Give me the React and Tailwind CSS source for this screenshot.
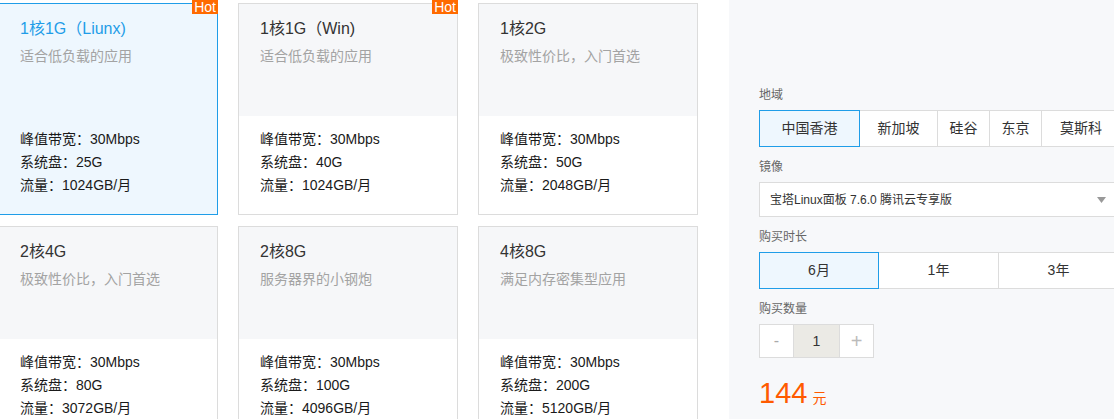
// Cloud server purchase page — plan cards on the left, order options on the right
import React from 'react';

const plans = [
  { name: '1核1G（Liunx)', desc: '适合低负载的应用', disk: '25G', flow: '1024GB/月', hot: true },
  { name: '1核1G（Win)', desc: '适合低负载的应用', disk: '40G', flow: '1024GB/月', hot: true },
  { name: '1核2G', desc: '极致性价比，入门首选', disk: '50G', flow: '2048GB/月' },
  { name: '2核4G', desc: '极致性价比，入门首选', disk: '80G', flow: '3072GB/月' },
  { name: '2核8G', desc: '服务器界的小钢炮', disk: '100G', flow: '4096GB/月' },
  { name: '4核8G', desc: '满足内存密集型应用', disk: '200G', flow: '5120GB/月' },
];

const regions = [
  { label: '中国香港', w: 'w-[101px]' },
  { label: '新加坡', w: 'w-[78px]' },
  { label: '硅谷', w: 'w-[53px]' },
  { label: '东京', w: 'w-[53px]' },
  { label: '莫斯科', w: 'w-[80px]' },
];

const durations = ['6月', '1年', '3年'];

const PlanCard = ({ plan, active }) => (
  <div
    className={`relative w-[220px] h-[212px] border ${
      active ? 'border-[#1f9de8] bg-[#eef7fe]' : 'border-[#dcdcdc] bg-white'
    }`}
  >
    {plan.hot && (
      <span className="absolute top-[-4px] right-[-1px] h-[14px] px-[2px] bg-[#ff6a00] text-white text-[14px] leading-[15px]">
        Hot
      </span>
    )}
    <div className={`h-[112px] px-[21px] pt-[14px] ${active ? '' : 'bg-[#f6f7f9]'}`}>
      <div className={`text-[16px] leading-[22px] ${active ? 'text-[#1f9de8]' : 'text-[#333]'}`}>{plan.name}</div>
      <div className="mt-[6px] text-[14px] leading-[20px] text-[#a3a3a3]">{plan.desc}</div>
    </div>
    <div className="px-[21px] pt-[12px] text-[14px] leading-[23px] text-[#1a1a1a]">
      <div>峰值带宽：30Mbps</div>
      <div>系统盘：{plan.disk}</div>
      <div>流量：{plan.flow}</div>
    </div>
  </div>
);

const Label = ({ children, first }) => (
  <div className={`${first ? '' : 'mt-[10px]'} mb-[5px] text-[12px] leading-[20px] text-[#666]`}>{children}</div>
);

export default function App() {
  return (
    <div
      className="w-[1114px] h-[419px] overflow-hidden bg-white flex"
      style={{ fontFamily: '"Liberation Sans", "Noto Sans CJK SC", sans-serif' }}
    >
      <div className="ml-[-2px] pt-[3px] shrink-0">
        <div className="grid grid-cols-[220px_220px_220px] gap-x-[20px] gap-y-[11px]">
          {plans.map((p, i) => (
            <PlanCard key={p.name} plan={p} active={i === 0} />
          ))}
        </div>
      </div>

      <div className="ml-[31px] w-[420px] shrink-0 bg-[#f7f8fa] pl-[30px] pt-[85px]">
        <Label first>地域</Label>
        <div className="flex h-[37px]">
          {regions.map((r, i) => (
            <div
              key={r.label}
              className={`${r.w} shrink-0 flex items-center justify-center text-[14px] border ${
                i === 0 ? 'border-[#1f9de8] bg-[#eef7fe] text-[#333]' : 'border-[#dcdcdc] bg-white text-[#333]'
              } ${i > 1 ? 'ml-[-1px]' : ''} ${i === 1 ? 'border-l-0' : ''}`}
            >
              {r.label}
            </div>
          ))}
        </div>

        <Label>镜像</Label>
        <div className="w-[358px] h-[35px] border border-[#dcdcdc] bg-white flex items-center pl-[10px] pr-[10px] text-[12px] text-[#333]">
          <span className="flex-1">宝塔Linux面板 7.6.0 腾讯云专享版</span>
          <svg width="9" height="6" viewBox="0 0 9 6">
            <path d="M0 0 H9 L4.5 6 Z" fill="#999" />
          </svg>
        </div>

        <Label>购买时长</Label>
        <div className="flex h-[37px]">
          {durations.map((d, i) => (
            <div
              key={d}
              className={`w-[120px] shrink-0 flex items-center justify-center text-[14px] text-[#333] border ${
                i === 0 ? 'border-[#1f9de8] bg-[#eef7fe]' : 'border-[#dcdcdc] bg-white border-l-0'
              }`}
            >
              {d}
            </div>
          ))}
        </div>

        <Label>购买数量</Label>
        <div className="flex h-[34px] w-[115px] border border-[#dcdcdc] bg-white">
          <div className="w-[33px] flex items-center justify-center text-[16px] text-[#aaa]">-</div>
          <div className="w-[47px] flex items-center justify-center border-l border-r border-[#dcdcdc] bg-[#ebeae5] text-[14px] text-[#333]">
            1
          </div>
          <div className="w-[33px] flex items-center justify-center text-[20px] text-[#bbb] font-light">+</div>
        </div>

        <div className="mt-[18px] flex items-baseline text-[#ff5a00]">
          <span className="text-[29px] leading-[34px]">144</span>
          <span className="ml-[5px] text-[14px]">元</span>
        </div>
      </div>
    </div>
  );
}
